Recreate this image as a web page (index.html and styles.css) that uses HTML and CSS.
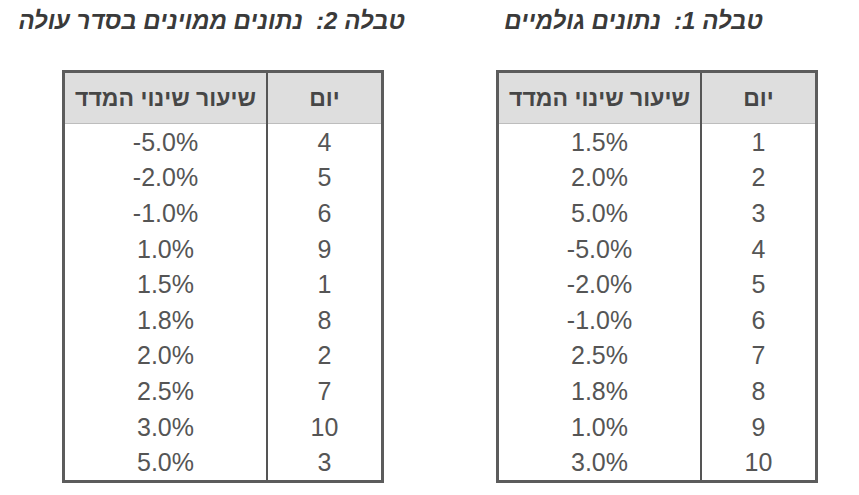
FILE: index.html
```html
<!DOCTYPE html>
<html lang="he" dir="rtl">
<head>
<meta charset="utf-8">
<title>טבלאות</title>
<link rel="stylesheet" href="styles.css">
</head>
<body>
<main class="page">
  <section class="block block-raw">
    <h2 class="title">טבלה 1:&nbsp; נתונים גולמיים</h2>
    <table class="data">
      <thead>
        <tr><th class="c-day">יום</th><th class="c-val">שיעור שינוי המדד</th></tr>
      </thead>
      <tbody>
        <tr><td>1</td><td class="num">1.5%</td></tr>
        <tr><td>2</td><td class="num">2.0%</td></tr>
        <tr><td>3</td><td class="num">5.0%</td></tr>
        <tr><td>4</td><td class="num">-5.0%</td></tr>
        <tr><td>5</td><td class="num">-2.0%</td></tr>
        <tr><td>6</td><td class="num">-1.0%</td></tr>
        <tr><td>7</td><td class="num">2.5%</td></tr>
        <tr><td>8</td><td class="num">1.8%</td></tr>
        <tr><td>9</td><td class="num">1.0%</td></tr>
        <tr><td>10</td><td class="num">3.0%</td></tr>
      </tbody>
    </table>
  </section>
  <section class="block block-sorted">
    <h2 class="title">טבלה 2:&nbsp; נתונים ממוינים בסדר עולה</h2>
    <table class="data">
      <thead>
        <tr><th class="c-day">יום</th><th class="c-val">שיעור שינוי המדד</th></tr>
      </thead>
      <tbody>
        <tr><td>4</td><td class="num">-5.0%</td></tr>
        <tr><td>5</td><td class="num">-2.0%</td></tr>
        <tr><td>6</td><td class="num">-1.0%</td></tr>
        <tr><td>9</td><td class="num">1.0%</td></tr>
        <tr><td>1</td><td class="num">1.5%</td></tr>
        <tr><td>8</td><td class="num">1.8%</td></tr>
        <tr><td>2</td><td class="num">2.0%</td></tr>
        <tr><td>7</td><td class="num">2.5%</td></tr>
        <tr><td>10</td><td class="num">3.0%</td></tr>
        <tr><td>3</td><td class="num">5.0%</td></tr>
      </tbody>
    </table>
  </section>
</main>
</body>
</html>
```
FILE: styles.css
```css
html, body {
  margin: 0;
  padding: 0;
  background: #ffffff;
}
body {
  font-family: "Liberation Sans", Arial, sans-serif;
  color: #505050;
  width: 859px;
  height: 495px;
  overflow: hidden;
}
.page {
  display: flex;
  flex-direction: row;
}
.block {
  display: flex;
  flex-direction: column;
  align-items: flex-start;
}
.block-raw {
  width: 429px;
}
.block-sorted {
  width: 430px;
}
.title {
  margin: 6px 0 0 0;
  height: 30px;
  line-height: 30px;
  font-size: 24px;
  font-weight: bold;
  font-style: italic;
  color: #3a3a3a;
  white-space: pre;
}
.block-raw .title {
  margin-right: 96px;
}
.block-sorted .title {
  margin-right: 25px;
}
.data {
  margin-top: 34px;
  border-collapse: collapse;
  border: 3px solid #5c5c5c;
  font-size: 25px;
  color: #555555;
}
.block-raw .data {
  margin-right: 41px;
}
.block-sorted .data {
  margin-right: 46px;
}
.data th {
  background: #dedede;
  height: 50px;
  padding: 0;
  font-size: 23px;
  font-weight: bold;
  color: #464646;
  text-align: center;
  border-bottom: 1px solid #bdbdbd;
}
.data td {
  height: 35.6px;
  padding: 0;
  text-align: center;
  line-height: 28px;
}
.data .num {
  direction: ltr;
}
.data .c-day,
.data td:first-child {
  width: 113px;
  border-left: 2px solid #555555;
}
.data .c-val {
  width: 201px;
}
```
